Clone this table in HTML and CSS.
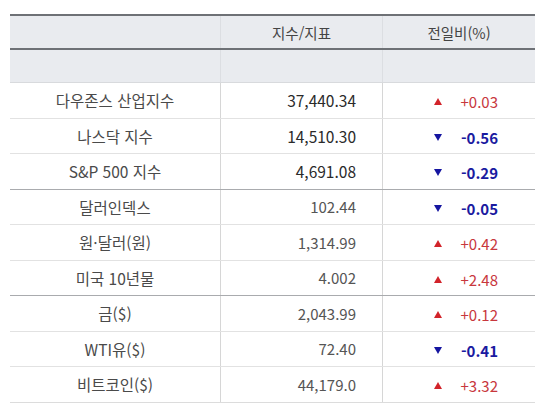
FILE: index.html
```html
<!DOCTYPE html>
<html lang="ko">
<head>
<meta charset="utf-8">
<link rel="stylesheet" href="styles.css">
</head>
<body>
<table class="market">
  <thead>
    <tr class="head">
      <th class="c1"></th>
      <th class="c2 center">지수/지표</th>
      <th class="c3 center">전일비(%)</th>
    </tr>
    <tr class="sub">
      <th class="c1"></th>
      <th class="c2"></th>
      <th class="c3"></th>
    </tr>
  </thead>
  <tbody>
    <tr><td class="name">다우존스 산업지수</td><td class="val big">37,440.34</td><td class="chg"><span class="box"><span class="tri up"></span><span class="num up">+0.03</span></span></td></tr>
    <tr><td class="name">나스닥 지수</td><td class="val big">14,510.30</td><td class="chg"><span class="box"><span class="tri down"></span><span class="num down">-0.56</span></span></td></tr>
    <tr class="grp"><td class="name">S&amp;P 500 지수</td><td class="val big">4,691.08</td><td class="chg"><span class="box"><span class="tri down"></span><span class="num down">-0.29</span></span></td></tr>
    <tr><td class="name">달러인덱스</td><td class="val">102.44</td><td class="chg"><span class="box"><span class="tri down"></span><span class="num down">-0.05</span></span></td></tr>
    <tr><td class="name">원·달러(원)</td><td class="val">1,314.99</td><td class="chg"><span class="box"><span class="tri up"></span><span class="num up">+0.42</span></span></td></tr>
    <tr class="grp"><td class="name">미국 10년물</td><td class="val">4.002</td><td class="chg"><span class="box"><span class="tri up"></span><span class="num up">+2.48</span></span></td></tr>
    <tr><td class="name">금($)</td><td class="val">2,043.99</td><td class="chg"><span class="box"><span class="tri up"></span><span class="num up">+0.12</span></span></td></tr>
    <tr><td class="name">WTI유($)</td><td class="val">72.40</td><td class="chg"><span class="box"><span class="tri down"></span><span class="num down">-0.41</span></span></td></tr>
    <tr class="last"><td class="name">비트코인($)</td><td class="val">44,179.0</td><td class="chg"><span class="box"><span class="tri up"></span><span class="num up">+3.32</span></span></td></tr>
  </tbody>
</table>
</body>
</html>
```
FILE: styles.css
```css
html, body {
  margin: 0;
  padding: 0;
  background: #ffffff;
}
body {
  padding: 14px 7px 0 10px;
  font-family: "Noto Sans CJK KR", "Noto Sans", sans-serif;
  color: #444;
  font-size: 15px;
}
.market {
  width: 523px;
  border-collapse: collapse;
  table-layout: fixed;
}
.market th {
  background: #e9ebef;
  font-weight: normal;
  color: #444;
  padding: 0;
  font-size: 14.5px;
}
.c1 { width: 210px; }
.c2 { width: 161px; }
.c3 { width: 152px; }
.head th {
  height: 32px;
  border-top: 2px solid #6e7176;
  border-bottom: 2px solid #6e7176;
}
.head th.c2, .sub th.c2 {
  border-left: 1px solid #dcdee2;
  border-right: 1px solid #dcdee2;
}
.sub th {
  height: 32px;
  border-bottom: 1px solid #d8dadd;
}
.center { text-align: center; }
.market td {
  height: 34.5px;
  padding: 0;
  border-bottom: 1px solid #e2e2e2;
}
.market tr.grp td {
  border-bottom: 1px solid #a9abae;
}
.market tr.last td {
  border-bottom: 1px solid #dcdcdc;
}
td.name {
  text-align: center;
  color: #4a4a4a;
  font-size: 15.5px;
}
td.val {
  text-align: right;
  padding-right: 26px;
  border-left: 1px solid #d6d6d6;
  border-right: 1px solid #d6d6d6;
  color: #555;
}
td.val.big {
  color: #2a2a2a;
  font-size: 15.5px;
}
td.chg {
  text-align: right;
  padding-right: 37px;
}
.box {
  display: inline-flex;
  align-items: center;
  width: 64px;
}
.tri {
  width: 0;
  height: 0;
  border-left: 4px solid transparent;
  border-right: 4px solid transparent;
}
.tri.up {
  border-bottom: 7px solid #d2232a;
}
.tri.down {
  border-top: 7px solid #1515a0;
}
.num {
  flex: 1;
  text-align: right;
}
.num.up {
  color: #c8373d;
}
.num.down {
  color: #1a1aa0;
  font-weight: bold;
}
```
